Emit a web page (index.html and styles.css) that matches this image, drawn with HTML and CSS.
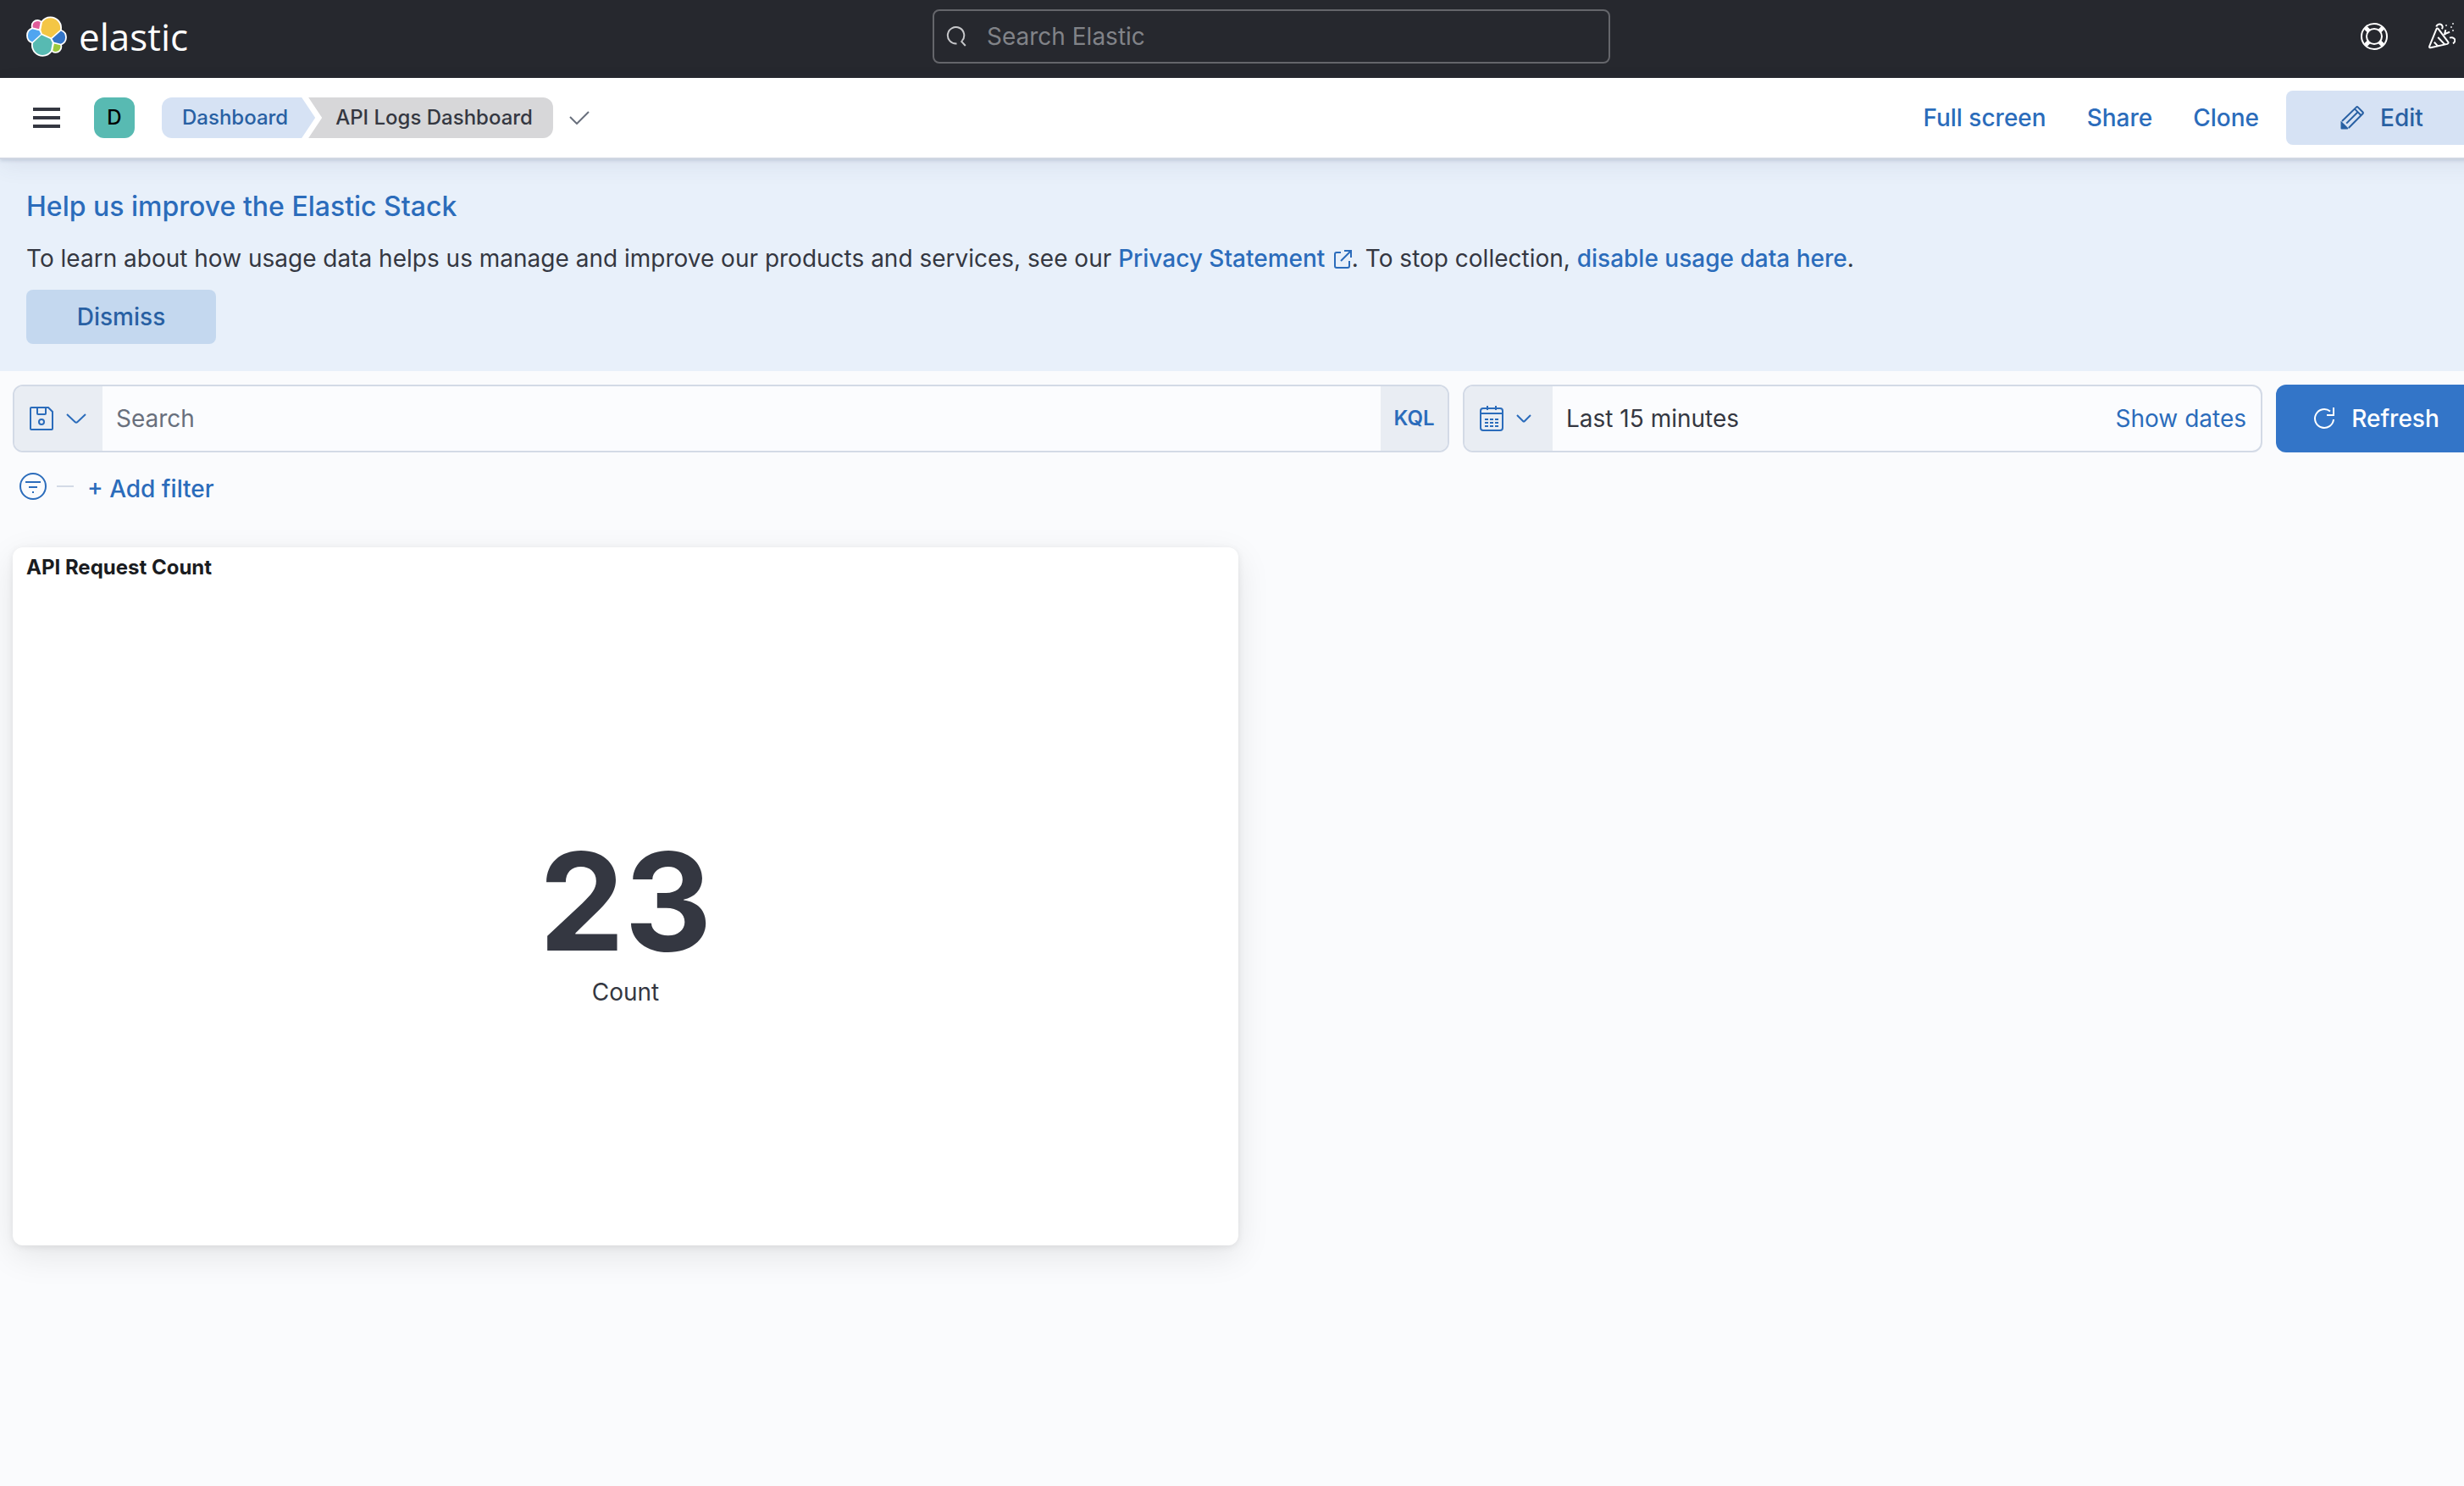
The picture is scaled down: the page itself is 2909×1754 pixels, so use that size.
FILE: index.html
```html
<!DOCTYPE html>
<html lang="en">
<head>
<meta charset="utf-8">
<title>API Logs Dashboard - Elastic</title>
<link rel="stylesheet" href="styles.css">
</head>
<body>
<div class="page">
  <header class="topbar">
    <a class="brand" href="#">
      <svg class="brand-mark" viewBox="0 0 32 32" aria-hidden="true">
        <defs>
          <g id="cluster">
            <path class="c-yellow" d="M12.58 13.787l7.002 3.211 7.066-6.213a7.849 7.849 0 00.152-1.557c0-4.287-3.464-7.77-7.727-7.77-2.556 0-4.944 1.262-6.388 3.379L11.5 10.929z"/>
            <path class="c-teal" d="M5.333 21.215a7.87 7.87 0 00-.151 1.58c0 4.297 3.481 7.79 7.766 7.79a7.75 7.75 0 006.417-3.4l1.17-6.12-1.561-2.985-7.02-3.21z"/>
            <path class="c-pink" d="M5.288 9.068l4.82 1.14 1.055-5.479a3.82 3.82 0 00-2.315-.786A3.823 3.823 0 005.03 7.757c0 .45.08.89.258 1.311z"/>
            <path class="c-sky" d="M4.874 10.214a5.382 5.382 0 00-3.582 5.063 5.361 5.361 0 003.428 4.992l6.762-6.117-1.242-2.657z"/>
            <path class="c-green" d="M20.866 27.184a3.79 3.79 0 002.303.787 3.823 3.823 0 003.818-3.814 3.8 3.8 0 00-.242-1.34l-4.815-1.129z"/>
            <path class="c-blue" d="M21.846 20.556l5.302 1.243a5.397 5.397 0 003.582-5.063 5.363 5.363 0 00-3.44-5.01l-6.932 6.082z"/>
          </g>
        </defs>
        <use href="#cluster" stroke="#fff" stroke-width="2.4" stroke-linejoin="round"/>
        <use href="#cluster"/>
      </svg>
      <span class="wordmark">elastic</span>
    </a>
    <label class="site-search">
      <svg class="icon-md" viewBox="0 0 24 24" aria-hidden="true"><path d="M12.500 20.400a9.700 9.700 0 1 1 6.300-3.200M17.600 17.400l5.200 5.600"/></svg>
      <input type="search" placeholder="Search Elastic" aria-label="Search Elastic">
    </label>
    <div class="topbar-actions">
      <button class="icon-button" type="button" aria-label="Help">
        <svg class="icon-lg" viewBox="0 0 32 32" aria-hidden="true">
          <circle cx="16" cy="16" r="15"/><circle cx="16" cy="16" r="9"/>
          <path class="thick" d="M5.800 5.800l4 4M26.200 5.800l-4 4M5.800 26.200l4-4M26.200 26.200l-4-4"/>
        </svg>
      </button>
      <button class="icon-button" type="button" aria-label="What's new">
        <svg class="icon-lg" viewBox="0 0 32 32" aria-hidden="true">
          <path d="M9.500 7.200 1.200 27.600c-.4 1.200.2 1.900 1.500 1.700l19.600-4.400c1.300-.4 1.600-1.600.8-2.500L11.700 7.200c-.7-.9-1.700-.9-2.200 0zM6.800 22.800l4.300 4.600M11.200 17l8 8.400M9.300 4.500c1-3.600 6-4.300 7.200-.8.500 1.400 0 2.600-.6 3.600M20.300 8.300l-1.200 4.800 6-2.300M25 17.600c4-1.500 7.600 1.500 5.900 4.800-.4.800-1.200 1.500-2 1.800M19 14l1.600-1.400"/>
          <path class="dots" d="M20 2h2v2h-2zM28 0h2v2h-2zM26 4h2v2h-2zM28 8h2v2h-2z"/>
        </svg>
      </button>
    </div>
  </header>

  <nav class="navbar" aria-label="Dashboard">
    <button class="menu-button" type="button" aria-label="Open menu"><span></span><span></span><span></span></button>
    <button class="space-avatar" type="button">D</button>
    <div class="crumbs">
      <a class="crumb crumb-first" href="#">Dashboard</a>
      <span class="crumb crumb-last">API Logs Dashboard</span>
    </div>
    <svg class="saved-check" viewBox="0 0 24 16" aria-hidden="true"><path d="M1 7l8 8L23 1"/></svg>
    <div class="nav-actions">
      <a class="nav-link" href="#">Full screen</a>
      <a class="nav-link" href="#">Share</a>
      <a class="nav-link" href="#">Clone</a>
      <button class="edit-button" type="button">
        <svg class="icon-28" viewBox="0 0 28 28" aria-hidden="true">
          <path d="M2 18 18.800 1.600q1-1 2 0l5.600 5.600q1 1 0 2L9.800 26M17 3.600l7.600 7.600M20.600 7.200 7.200 20.600"/>
          <path class="solid" d="M1 18l8.600 8.600-1 1H1.500Q.5 27.600.5 26.600V18z"/>
        </svg>
        Edit
      </button>
    </div>
  </nav>

  <section class="callout">
    <h2>Help us improve the Elastic Stack</h2>
    <p>To learn about how usage data helps us manage and improve our products and services, see our <a href="#">Privacy Statement <svg class="external" viewBox="0 0 22 22" aria-hidden="true"><path d="M9 3H4Q2 3 2 5v14q0 2 2 2h13q2 0 2-2v-6M13 1h8v8M21 1 9 13"/></svg></a>. To stop collection, <a href="#">disable usage data here</a>.</p>
    <button class="dismiss-button" type="button">Dismiss</button>
  </section>

  <main>
    <div class="query-row">
      <div class="field query-field">
        <button class="field-prefix" type="button" aria-label="Saved queries">
          <svg class="icon-28" viewBox="0 0 28 28" aria-hidden="true"><path d="M2 1h20l5 5v20q0 1-1 1H2q-1 0-1-1V2q0-1 1-1zM9 1v7q0 1 1 1h8q1 0 1-1V1"/><circle cx="14" cy="18" r="3"/></svg>
          <svg class="chevron" viewBox="0 0 24 12" aria-hidden="true"><path d="M1 1l9.500 9q1.500 1.300 3 0L23 1"/></svg>
        </button>
        <input type="text" placeholder="Search" aria-label="Search">
        <button class="language" type="button">KQL</button>
      </div>
      <div class="field date-field">
        <button class="field-prefix" type="button" aria-label="Quick select">
          <svg class="icon-cal" viewBox="0 0 28 30" aria-hidden="true">
            <rect x="1" y="3" width="26" height="26" rx="3"/><path d="M1 9h26M9 0v5M19 0v5"/>
            <path class="dashes" d="M6 16h16M6 20h16M6 24h16"/>
          </svg>
          <svg class="chevron-sm" viewBox="0 0 18 10" aria-hidden="true"><path d="M1 1l7 7q1 1 2 0l7-7"/></svg>
        </button>
        <button class="date-range" type="button">Last 15 minutes</button>
        <button class="show-dates" type="button">Show dates</button>
      </div>
      <button class="refresh-button" type="button">
        <svg class="icon-refresh" viewBox="0 0 24 26" aria-hidden="true"><path d="M23 14a11 11 0 1 1-4-9.500M15 9h8V0"/></svg>
        Refresh
      </button>
    </div>

    <div class="filter-row">
      <button class="filter-button" type="button" aria-label="Filter options">
        <svg class="icon-lg" viewBox="0 0 32 32" aria-hidden="true"><circle cx="16" cy="16" r="15"/><path d="M7 11h18M11 17h10M15 23h2"/></svg>
      </button>
      <span class="dash"></span>
      <button class="add-filter" type="button">+ Add filter</button>
    </div>

    <div class="panels">
      <article class="panel">
        <h3>API Request Count</h3>
        <div class="metric">
          <div class="metric-value">23</div>
          <div class="metric-label">Count</div>
        </div>
      </article>
    </div>
  </main>
</div>
</body>
</html>
```
FILE: styles.css
```css
* { box-sizing: border-box; }

html { overflow-x: hidden; }

body {
  margin: 0;
  background: #fafbfd;
  color: #343741;
  font: 400 28px/40px Inter, "Liberation Sans", sans-serif;
  overflow-x: hidden;
}

button, input { font: inherit; color: inherit; }

button {
  margin: 0;
  padding: 0;
  border: 0;
  background: none;
  cursor: pointer;
}

a { color: #2b6cbb; text-decoration: none; font-weight: 500; }

svg { display: block; flex: none; fill: none; stroke: currentColor; stroke-width: 2; }

.icon-md { width: 24px; height: 24px; }
.icon-refresh { width: 24px; height: 26px; }
.icon-28 { width: 28px; height: 28px; }
.icon-cal { width: 28px; height: 30px; }
.icon-lg { width: 32px; height: 32px; }

/* The layout runs slightly past the right edge of the window. */
.page { width: calc(100% + 32px); }

/* Top bar */
.topbar {
  display: grid;
  grid-template-columns: 1101fr 800px 1040fr;
  align-items: center;
  height: 92px;
  padding-bottom: 6px;
  background: #26282e;
  color: #fff;
}

.brand {
  display: flex;
  align-items: center;
  gap: 14px;
  padding-left: 31px;
  color: #fff;
}

.brand-mark { width: 48px; height: 48px; stroke: none; }
.c-yellow { fill: #f4c645; }
.c-teal { fill: #57bab2; }
.c-pink { fill: #e05c99; }
.c-sky { fill: #50a5f0; }
.c-green { fill: #9cc93d; }
.c-blue { fill: #3375c8; }

.wordmark { font: 400 44px/48px "Open Sans", "Noto Sans", sans-serif; }

.site-search {
  display: flex;
  align-items: center;
  gap: 24px;
  height: 64px;
  padding: 0 14px;
  border: 2px solid #65666b;
  border-radius: 8px;
}

.site-search svg { color: #c6c7ca; }

input {
  flex: 1;
  min-width: 0;
  padding: 0;
  border: 0;
  outline: 0;
  background: none;
}

input::placeholder { color: #69707d; opacity: 1; }
.site-search input::placeholder { color: #818388; }

.topbar-actions {
  display: flex;
  justify-content: flex-end;
  padding-right: 18px;
}

.icon-button {
  display: grid;
  place-items: center;
  width: 80px;
  height: 64px;
}

.icon-button .thick { stroke-width: 5; }
.dots { fill: #b4b5b9; stroke: none; }

/* Navigation bar */
.navbar {
  position: relative;
  display: flex;
  align-items: center;
  height: 96px;
  padding: 0 16px 0 39px;
  border-bottom: 2px solid #d0d6e2;
  background: #fff;
  box-shadow: 0 2px 4px rgba(60, 80, 110, .16), 0 8px 24px rgba(60, 80, 110, .08);
}

.menu-button {
  display: flex;
  flex-direction: column;
  gap: 6px;
  width: 32px;
}

.menu-button span { height: 4px; background: #343741; }

.space-avatar {
  width: 48px;
  height: 48px;
  margin-left: 40px;
  border-radius: 12px;
  background: #58bab2;
  color: #000;
  font-size: 24px;
  font-weight: 500;
}

.crumbs {
  display: flex;
  margin-left: 32px;
  font-size: 24px;
  line-height: 48px;
}

.crumb { height: 48px; font-weight: 500; }

.crumb-first {
  padding: 0 32px 0 24px;
  border-radius: 12px 0 0 12px;
  background: #d6e2f4;
  color: #2860a3;
  clip-path: polygon(0 0, calc(100% - 16px) 0, 100% 50%, calc(100% - 16px) 100%, 0 100%);
}

.crumb-last {
  margin-left: -8px;
  padding: 0 24px 0 32px;
  border-radius: 0 12px 12px 0;
  background: #d7d7d9;
  clip-path: polygon(0 0, 100% 0, 100% 100%, 0 100%, 16px 50%);
}

.saved-check { width: 24px; height: 16px; margin-left: 19px; color: #69707d; }

.nav-actions {
  display: flex;
  align-items: center;
  gap: 16px;
  margin-left: auto;
}

.nav-link { padding: 0 16px; }

.edit-button {
  display: flex;
  align-items: center;
  justify-content: center;
  gap: 19px;
  width: 226px;
  height: 64px;
  border-radius: 8px;
  background: #d6e2f4;
  color: #2860a3;
  font-weight: 500;
}

.solid { fill: currentColor; stroke: none; }

/* Callout */
.callout {
  padding: 32px 31px;
  background: #e8f0fa;
}

.callout h2 {
  margin: 0 0 16px;
  color: #2b6cbb;
  font-size: 32px;
  font-weight: 500;
  line-height: 48px;
}

.callout p { margin: 0 0 16px; line-height: 42px; }

.external {
  display: inline-block;
  width: 22px;
  height: 22px;
  margin-left: 2px;
  vertical-align: -2px;
}

.dismiss-button {
  display: block;
  width: 224px;
  height: 64px;
  border-radius: 8px;
  background: #c4d8ef;
  color: #2860a3;
  font-weight: 500;
}

/* Query bar */
main { padding: 16px 16px 64px 15px; }

.query-row { display: flex; gap: 16px; }

.field {
  display: flex;
  height: 80px;
  overflow: hidden;
  border: 2px solid #d3dae6;
  border-radius: 12px;
  background: #fbfcfe;
}

.query-field { flex: 1; }
.date-field { flex: 0 1 944px; }

.field-prefix {
  display: flex;
  align-items: center;
  gap: 15px;
  width: 104px;
  padding-left: 18px;
  background: #e9edf3;
  color: #2b6cbb;
}

.chevron { width: 24px; height: 12px; }
.chevron-sm { width: 18px; height: 10px; }
.dashes { stroke-dasharray: 4 2; }

.query-field input { padding-left: 16px; }

.language {
  width: 79px;
  background: #e9edf3;
  color: #2b6cbb;
  font-size: 24px;
  font-weight: 600;
}

.date-range { flex: 1; padding-left: 16px; text-align: left; }
.show-dates { padding-right: 17px; color: #2b6cbb; }

.refresh-button {
  display: flex;
  align-items: center;
  justify-content: center;
  gap: 20px;
  width: 238px;
  border-radius: 12px;
  background: #3375c8;
  color: #fff;
  font-weight: 500;
}

/* Filters */
.filter-row {
  display: flex;
  align-items: center;
  height: 80px;
  padding: 0 8px;
}

.filter-button { color: #2b6cbb; }

.dash {
  width: 20px;
  height: 2px;
  margin: 0 16px 0 12px;
  background: #d3dae6;
}

.add-filter { padding-top: 6px; color: #2b6cbb; font-weight: 500; }

/* Panels */
.panels {
  display: grid;
  grid-template-columns: 1fr 1fr;
  gap: 16px;
  margin-top: 32px;
}

.panel {
  display: flex;
  flex-direction: column;
  height: 824px;
  border-radius: 12px;
  background: #fff;
  box-shadow: 0 2px 8px rgba(0, 0, 0, .08), 0 12px 40px rgba(0, 0, 0, .09);
}

.panel h3 {
  margin: 0;
  padding: 0 16px;
  color: #1a1c21;
  font-size: 24px;
  font-weight: 700;
  line-height: 48px;
}

.metric {
  display: flex;
  flex: 1;
  flex-direction: column;
  align-items: center;
  justify-content: center;
  padding-top: 6px;
}

.metric-value { font-size: 160px; font-weight: 700; line-height: 172px; }
.metric-label { line-height: 42px; }
```
